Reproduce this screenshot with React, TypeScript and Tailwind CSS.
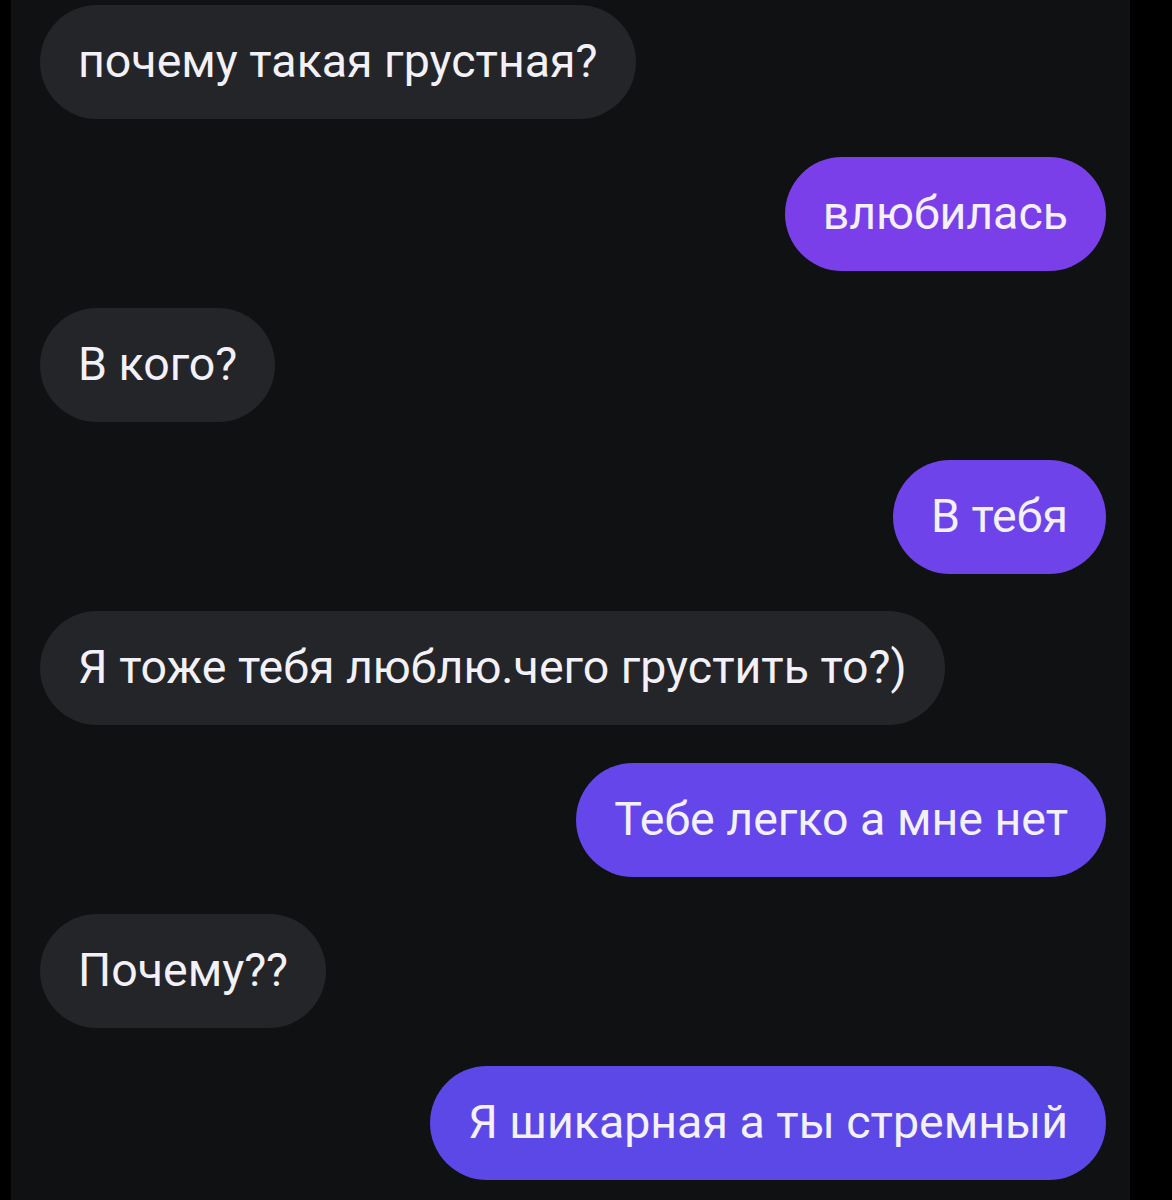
import React from "react";

type Msg = { text: string; mine: boolean; bg: string };

const messages: Msg[] = [
  { text: "почему такая грустная?", mine: false, bg: "bg-[#232529]" },
  { text: "влюбилась", mine: true, bg: "bg-[#7b3fe9]" },
  { text: "В кого?", mine: false, bg: "bg-[#232529]" },
  { text: "В тебя", mine: true, bg: "bg-[#6f43ea]" },
  { text: "Я тоже тебя люблю.чего грустить то?)", mine: false, bg: "bg-[#232529]" },
  { text: "Тебе легко а мне нет", mine: true, bg: "bg-[#6446ea]" },
  { text: "Почему??", mine: false, bg: "bg-[#232529]" },
  { text: "Я шикарная а ты стремный", mine: true, bg: "bg-[#5b48e6]" },
];

export default function App() {
  return (
    <div className="flex h-[1200px] w-[1172px] overflow-hidden bg-black font-['Roboto',sans-serif]">
      <div className="ml-[11px] flex w-[1119px] flex-col gap-[37.5px] bg-[#0f1112] pl-[29px] pr-[24px] pt-[5px]">
        {messages.map((m, i) => (
          <div key={i} className={m.mine ? "flex justify-end" : "flex justify-start"}>
            <div
              className={`flex h-[114px] items-center whitespace-nowrap rounded-full px-[38px] text-[46.5px] text-[#f3f1f7] ${m.bg}`}
            >
              {m.text}
            </div>
          </div>
        ))}
      </div>
    </div>
  );
}
